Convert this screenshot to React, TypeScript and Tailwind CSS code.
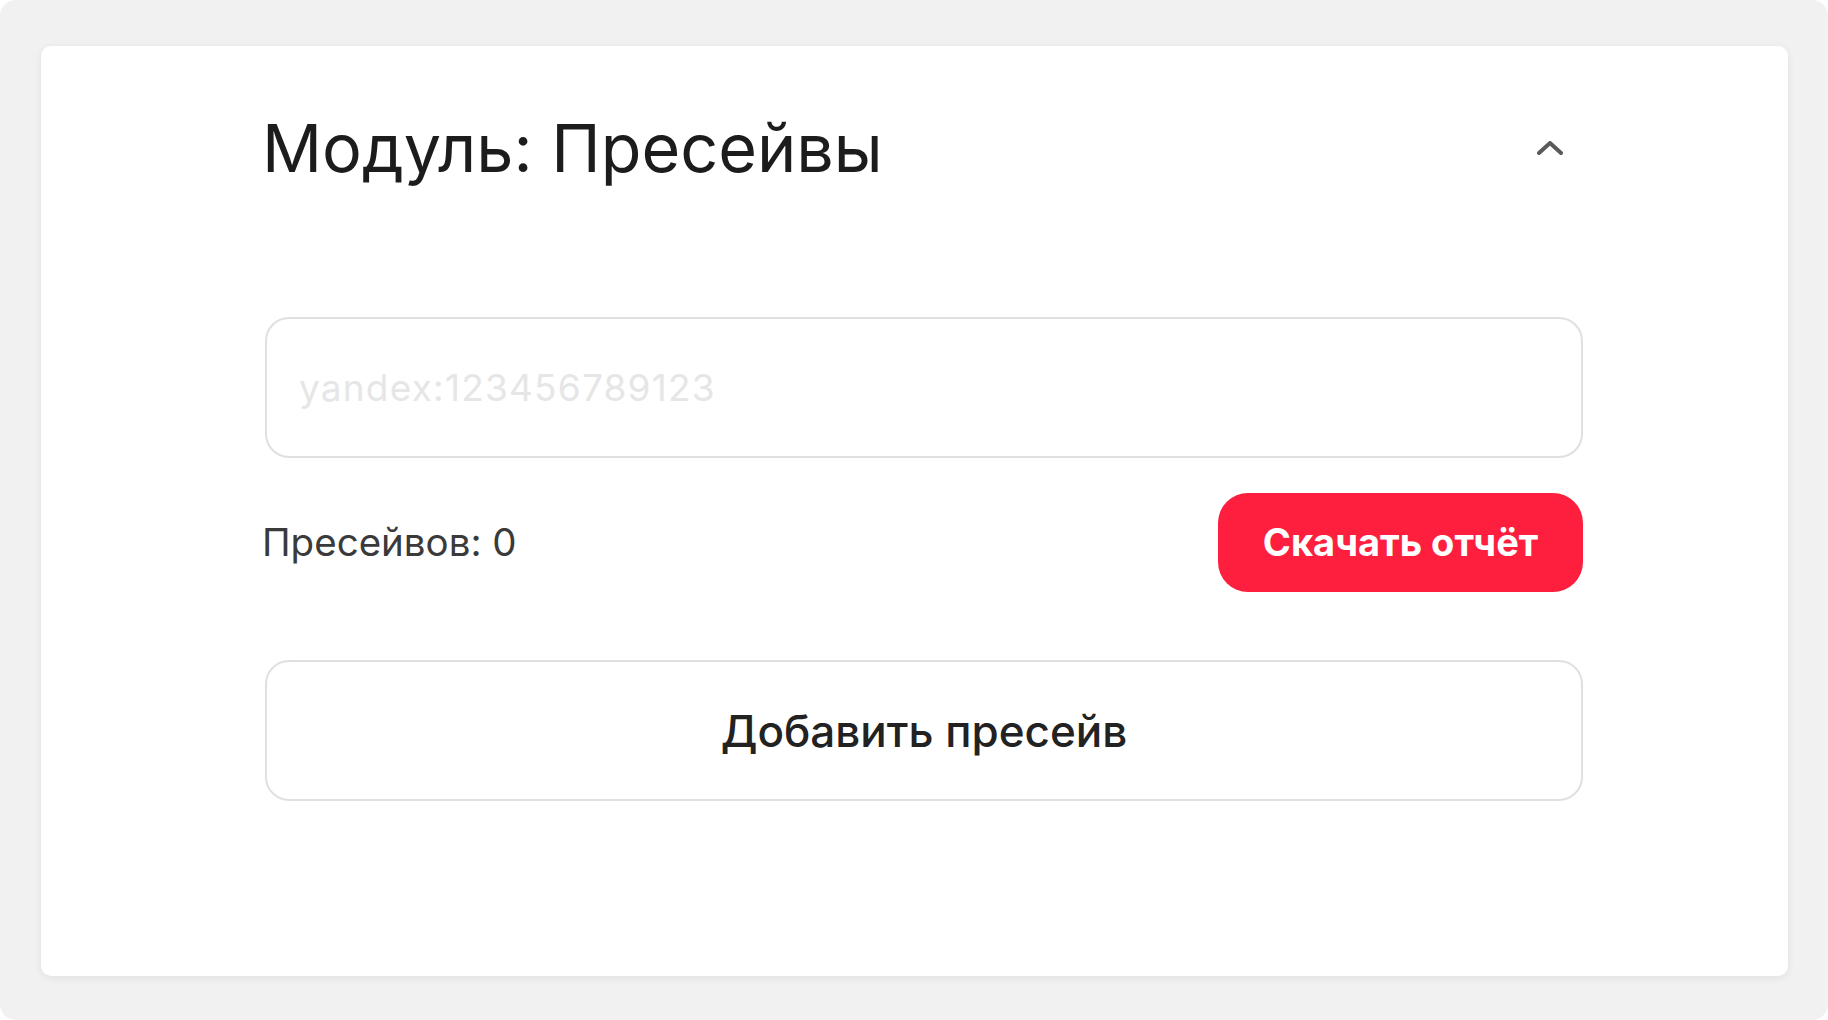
import { useState } from "react";

const App = () => {
  const [open, setOpen] = useState(true);
  const [value, setValue] = useState("");
  const [count] = useState(0);

  return (
    <div
      className="w-screen h-screen bg-white"
      style={{ fontFamily: "Inter, 'Noto Sans', sans-serif" }}
    >
      <div className="h-full rounded-[16px] bg-[#f1f1f1] pt-[46px] pl-[41px] pr-[40px] pb-[44px]">
        {/* card */}
        <div className="h-full bg-white rounded-[10px] shadow-[0_2px_8px_rgba(0,0,0,0.07)] pl-[224px] pr-[205px] pt-[69px]">
          {/* header */}
          <div className="flex items-center justify-between">
            <h2 className="-ml-[3px] text-[66.5px] leading-[66px] font-normal text-[#1c1c1c]">
              Модуль: Пресейвы
            </h2>
            <button
              onClick={() => setOpen(!open)}
              className="w-[66px] h-[66px] flex items-center justify-center"
            >
              <svg width="26" height="14" viewBox="0 0 26 14" fill="none">
                <polyline
                  points={open ? "2,12 13,2 24,12" : "2,2 13,12 24,2"}
                  stroke="#5a5a5a"
                  strokeWidth="4"
                  strokeLinecap="round"
                  strokeLinejoin="round"
                />
              </svg>
            </button>
          </div>

          {open && (
            <div className="mt-[136px]">
              {/* input */}
              <input
                value={value}
                onChange={(e) => setValue(e.target.value)}
                placeholder="yandex:123456789123"
                className="w-full h-[141px] border-2 border-[#e0e0e0] rounded-[24px] pl-[32px] text-[37px] tracking-[1.2px] text-[#222] placeholder:text-[#e6e6e6] outline-none"
              />

              {/* stats row */}
              <div className="flex items-center justify-between mt-[35px]">
                <p className="-ml-[3px] text-[38.5px] text-[#3a3a3a]">Пресейвов: {count}</p>
                <button className="h-[99px] w-[365px] rounded-[30px] bg-[#fe1f3e] text-white text-[38px] font-bold">
                  Скачать отчёт
                </button>
              </div>

              {/* add */}
              <button className="mt-[68px] w-full h-[141px] border-2 border-[#e0e0e0] rounded-[24px] text-[44px] font-medium text-[#222]">
                Добавить пресейв
              </button>
            </div>
          )}
        </div>
      </div>
    </div>
  );
};

export default App;
